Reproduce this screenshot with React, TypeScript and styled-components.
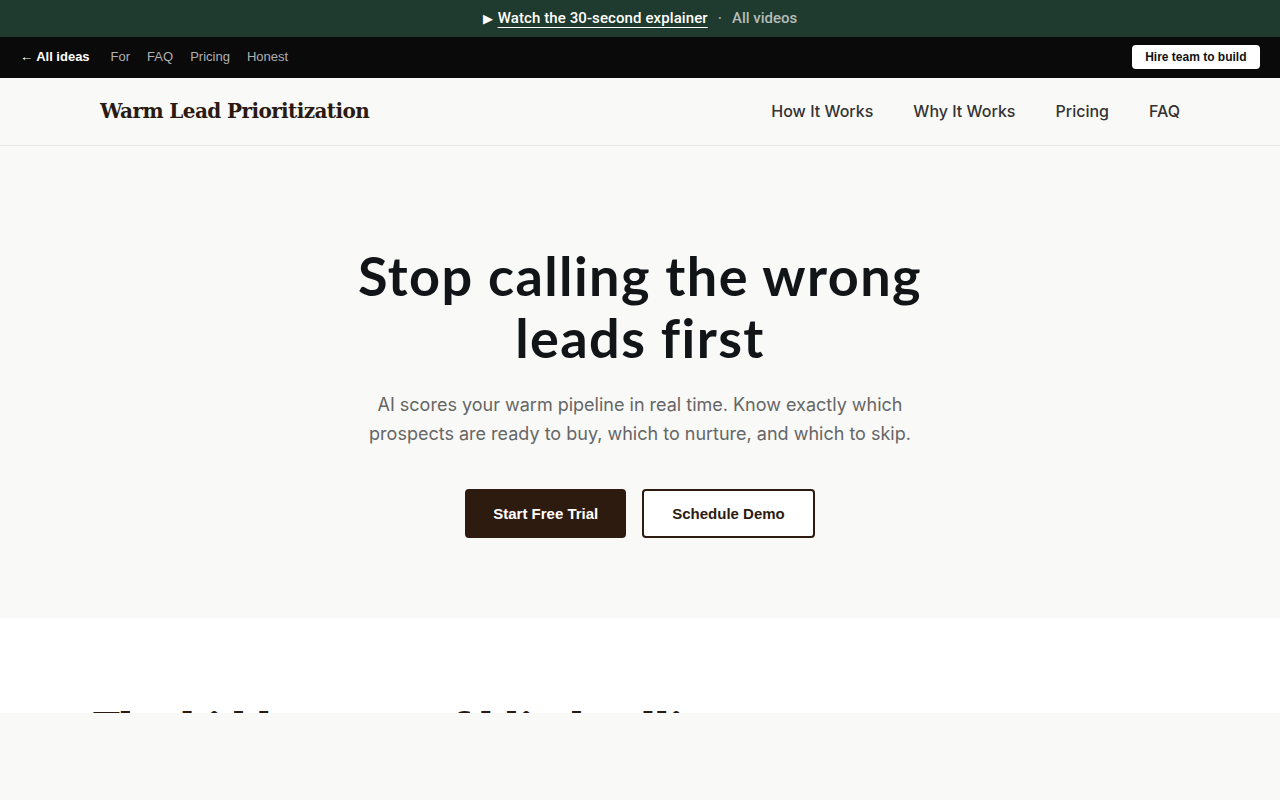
import styled, { createGlobalStyle } from "styled-components";

const GlobalStyle = createGlobalStyle`
  * { box-sizing: border-box; }
  html, body {
    margin: 0;
    padding: 0;
    background: #f9f9f7;
  }
  a { text-decoration: none; color: inherit; }
`

const Promo = styled.div`
  height: 37px;
  background: #1f3a2e;
  display: flex;
  align-items: center;
  justify-content: center;
  gap: 8px;
  padding-bottom: 1px;
  font-family: Roboto, "Liberation Sans", sans-serif;
  font-size: 15px;
  font-weight: 500;
  color: #fff;

  .play { font-size: 13px; margin-right: -3px; }
  .watch {
    text-decoration: underline;
    text-underline-offset: 4px;
    text-decoration-thickness: 1px;
    letter-spacing: 0.1px;
  }
  .dot { color: #9aa59f; margin: 0 2px; }
  .all { color: #b5bdb8; }
`

const TopBar = styled.div`
  height: 41px;
  background: #0a0a0a;
  display: flex;
  align-items: center;
  justify-content: space-between;
  padding: 0 20px 2px;
  font-family: "Liberation Sans", Arial, sans-serif;
  font-size: 13px;
`

const TopLinks = styled.nav`
  display: flex;
  align-items: center;
  gap: 17px;
`

const TopLink = styled.a<{ $strong?: boolean }>`
  color: ${p => (p.$strong ? "#fff" : "#b0b0b0")};
  font-weight: ${p => (p.$strong ? 700 : 400)};
  margin-right: ${p => (p.$strong ? "4px" : "0")};
`

const HireButton = styled.a`
  background: #fff;
  color: #111;
  font-weight: 700;
  font-size: 12px;
  border-radius: 4px;
  padding: 5px 13.5px;
  line-height: 14px;
`

const Header = styled.header`
  height: 68px;
  border-bottom: 1px solid #e6e6e3;
  background: #f9f9f7;
  display: flex;
  align-items: center;
  justify-content: space-between;
  padding: 0 100px 1px;
`

const Logo = styled.a`
  font-family: "DejaVu Serif", "Liberation Serif", serif;
  font-weight: 700;
  font-size: 20px;
  letter-spacing: -0.6px;
  color: #2a1a12;
`

const MainNav = styled.nav`
  display: flex;
  gap: 40px;
  font-family: Inter, "Liberation Sans", sans-serif;
  font-size: 16px;
  font-weight: 500;
  color: #333;
`

const Hero = styled.section`
  background: #f9f9f7;
  height: 472px;
  display: flex;
  flex-direction: column;
  align-items: center;
  padding-top: 99px;
  text-align: center;
`

const Title = styled.h1`
  margin: 0;
  font-family: Lato, "Open Sans", sans-serif;
  font-weight: 700;
  font-size: 54px;
  line-height: 62px;
  letter-spacing: 1.4px;
  color: #111518;
  max-width: 640px;
`

const Lead = styled.p`
  margin: 21px 0 0;
  font-family: Inter, "Liberation Sans", sans-serif;
  font-size: 18px;
  line-height: 29px;
  color: #666;
  max-width: 560px;
`

const Actions = styled.div`
  display: flex;
  gap: 16px;
  margin-top: 41px;
`

const Button = styled.a<{ $outline?: boolean }>`
  height: 49px;
  padding: 0 ${p => (p.$outline ? "28px" : "26px")};
  display: flex;
  align-items: center;
  border-radius: 4px;
  font-family: "Liberation Sans", Arial, sans-serif;
  font-weight: 700;
  font-size: 15px;
  background: ${p => (p.$outline ? "#fff" : "#2e1b10")};
  color: ${p => (p.$outline ? "#2e1b10" : "#fff")};
  border: 2px solid #2e1b10;
`

// next section, only the top of its heading shows above the fold
const NextSection = styled.section`
  background: #fff;
  height: 95px;
  overflow: hidden;
  padding: 85px 93px 0;
`

const SectionTitle = styled.h2`
  margin: 0;
  font-family: "DejaVu Serif", "Liberation Serif", serif;
  font-weight: 700;
  font-size: 36px;
  line-height: 44px;
  color: #2a1a12;
  white-space: nowrap;
`

export default function App() {
  return (
    <>
      <GlobalStyle />
      <Promo>
        <span className="play">▶</span>
        <a className="watch" href="#">Watch the 30-second explainer</a>
        <span className="dot">·</span>
        <a className="all" href="#">All videos</a>
      </Promo>
      <TopBar>
        <TopLinks>
          <TopLink $strong href="#">← All ideas</TopLink>
          <TopLink href="#">For</TopLink>
          <TopLink href="#">FAQ</TopLink>
          <TopLink href="#">Pricing</TopLink>
          <TopLink href="#">Honest</TopLink>
        </TopLinks>
        <HireButton href="#">Hire team to build</HireButton>
      </TopBar>
      <Header>
        <Logo href="#">Warm Lead Prioritization</Logo>
        <MainNav>
          <a href="#">How It Works</a>
          <a href="#">Why It Works</a>
          <a href="#">Pricing</a>
          <a href="#">FAQ</a>
        </MainNav>
      </Header>
      <Hero>
        <Title>Stop calling the wrong leads first</Title>
        <Lead>
          AI scores your warm pipeline in real time. Know exactly which prospects are ready to buy,
          which to nurture, and which to skip.
        </Lead>
        <Actions>
          <Button href="#">Start Free Trial</Button>
          <Button $outline href="#">Schedule Demo</Button>
        </Actions>
      </Hero>
      <NextSection>
        <SectionTitle>The hidden cost of blind calling</SectionTitle>
      </NextSection>
    </>
  );
}
